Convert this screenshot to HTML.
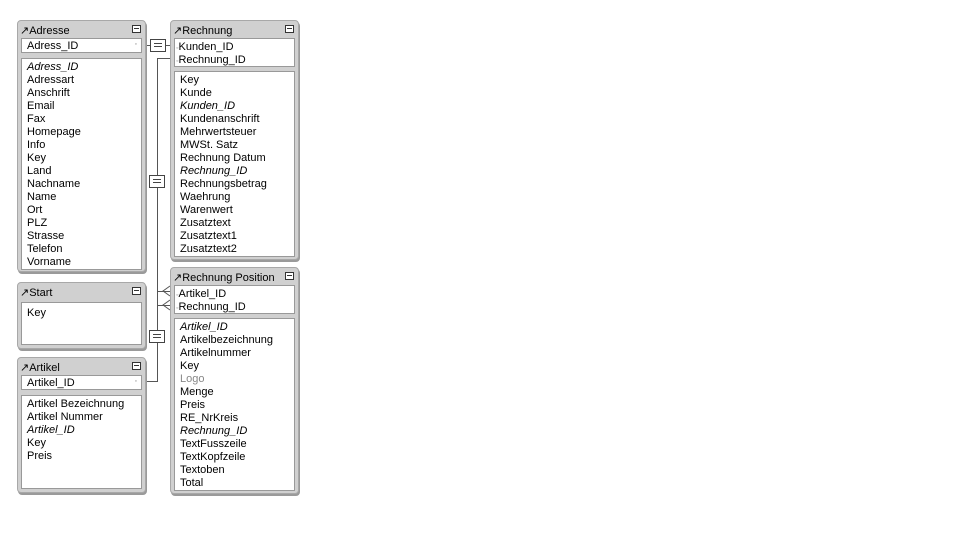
<!DOCTYPE html>
<html><head><meta charset="utf-8"><style>
body{margin:0;width:967px;height:537px;background:#fff;position:relative;overflow:hidden;font-family:"Liberation Sans",Tahoma,sans-serif;font-size:11px;color:#000}
.p{position:absolute;background:#d0d0d0;border:1px solid #a8a8a8;border-radius:4px;box-shadow:1px 2px 0 #9a9a9a}
.h{position:absolute;left:2px;top:3px;font-size:11px}
.m{position:absolute;right:4px;top:4px;width:7px;height:6px;border:1px solid #333;background:#fff}
.m:after{content:"";position:absolute;left:1px;top:2px;width:5px;height:1px;background:#333}
.b{position:absolute;left:3px;right:3px;background:#fff;border:1px solid #999}
.r{position:absolute;left:5px;line-height:13px;margin-top:1px}
.i{font-style:italic}
.g{color:#888}
.d{position:absolute;right:4px;font-size:7px;color:#888}
.ln{position:absolute;background:#555}
.eq{position:absolute;width:14px;height:11px;border:1px solid #444;background:#fff}
.eq:before,.eq:after{content:"";position:absolute;left:3px;width:8px;height:1px;background:#444}
.eq:before{top:3px}.eq:after{top:6px}
</style></head><body>

<div class="ln" style="left:146px;top:45px;width:24px;height:1px"></div>
<div class="ln" style="left:157px;top:58px;width:1px;height:324px"></div>
<div class="ln" style="left:157px;top:58px;width:13px;height:1px"></div>
<div class="ln" style="left:157px;top:291px;width:13px;height:1px"></div>
<div class="ln" style="left:157px;top:305px;width:13px;height:1px"></div>
<div class="ln" style="left:146px;top:381px;width:11px;height:1px"></div>
<svg style="position:absolute;left:160px;top:285px" width="12" height="26"><path d="M10 1 L3 6 L10 11 M10 15 L3 20 L10 25" stroke="#555" fill="none"/></svg>
<div class="eq" style="left:150px;top:39px"></div>
<div class="eq" style="left:149px;top:175px"></div>
<div class="eq" style="left:149px;top:330px"></div>

<div class="p" style="left:17px;top:20px;width:127px;height:250px">
<div class="h">↗Adresse</div><div class="m"></div>
<div class="b" style="top:17px;height:13px"><div class="r" style="left:5px;top:0">Adress_ID</div><div class="d" style="top:2px">◦</div></div>
<div class="b" style="top:37px;height:210px">
<div class="r i" style="top:1px">Adress_ID</div><div class="r" style="top:14px">Adressart</div><div class="r" style="top:27px">Anschrift</div><div class="r" style="top:40px">Email</div><div class="r" style="top:53px">Fax</div><div class="r" style="top:66px">Homepage</div><div class="r" style="top:79px">Info</div><div class="r" style="top:92px">Key</div><div class="r" style="top:105px">Land</div><div class="r" style="top:118px">Nachname</div><div class="r" style="top:131px">Name</div><div class="r" style="top:144px">Ort</div><div class="r" style="top:157px">PLZ</div><div class="r" style="top:170px">Strasse</div><div class="r" style="top:183px">Telefon</div><div class="r" style="top:196px">Vorname</div>
</div></div>

<div class="p" style="left:17px;top:282px;width:127px;height:65px">
<div class="h">↗Start</div><div class="m"></div>
<div class="b" style="top:19px;height:41px"><div class="r" style="top:3px">Key</div></div>
</div>

<div class="p" style="left:17px;top:357px;width:127px;height:134px">
<div class="h">↗Artikel</div><div class="m"></div>
<div class="b" style="top:17px;height:13px"><div class="r" style="left:5px;top:0">Artikel_ID</div><div class="d" style="top:2px">◦</div></div>
<div class="b" style="top:37px;height:92px">
<div class="r" style="top:1px">Artikel Bezeichnung</div><div class="r" style="top:14px">Artikel Nummer</div><div class="r i" style="top:27px">Artikel_ID</div><div class="r" style="top:40px">Key</div><div class="r" style="top:53px">Preis</div>
</div></div>

<div class="p" style="left:170px;top:20px;width:127px;height:238px">
<div class="h">↗Rechnung</div><div class="m"></div>
<div class="b" style="top:17px;height:27px"><div class="r" style="left:1px;top:1px"><span style="font-size:7px;color:#888">◦</span>Kunden_ID</div><div class="r" style="left:1px;top:14px"><span style="font-size:7px;color:#888">◦</span>Rechnung_ID</div></div>
<div class="b" style="top:50px;height:184px">
<div class="r" style="top:1px">Key</div><div class="r" style="top:14px">Kunde</div><div class="r i" style="top:27px">Kunden_ID</div><div class="r" style="top:40px">Kundenanschrift</div><div class="r" style="top:53px">Mehrwertsteuer</div><div class="r" style="top:66px">MWSt. Satz</div><div class="r" style="top:79px">Rechnung Datum</div><div class="r i" style="top:92px">Rechnung_ID</div><div class="r" style="top:105px">Rechnungsbetrag</div><div class="r" style="top:118px">Waehrung</div><div class="r" style="top:131px">Warenwert</div><div class="r" style="top:144px">Zusatztext</div><div class="r" style="top:157px">Zusatztext1</div><div class="r" style="top:170px">Zusatztext2</div>
</div></div>

<div class="p" style="left:170px;top:267px;width:127px;height:225px">
<div class="h">↗Rechnung Position</div><div class="m"></div>
<div class="b" style="top:17px;height:27px"><div class="r" style="left:1px;top:1px"><span style="font-size:7px;color:#888">◦</span>Artikel_ID</div><div class="r" style="left:1px;top:14px"><span style="font-size:7px;color:#888">◦</span>Rechnung_ID</div></div>
<div class="b" style="top:50px;height:171px">
<div class="r i" style="top:1px">Artikel_ID</div><div class="r" style="top:14px">Artikelbezeichnung</div><div class="r" style="top:27px">Artikelnummer</div><div class="r" style="top:40px">Key</div><div class="r g" style="top:53px">Logo</div><div class="r" style="top:66px">Menge</div><div class="r" style="top:79px">Preis</div><div class="r" style="top:92px">RE_NrKreis</div><div class="r i" style="top:105px">Rechnung_ID</div><div class="r" style="top:118px">TextFusszeile</div><div class="r" style="top:131px">TextKopfzeile</div><div class="r" style="top:144px">Textoben</div><div class="r" style="top:157px">Total</div>
</div></div>

</body></html>
